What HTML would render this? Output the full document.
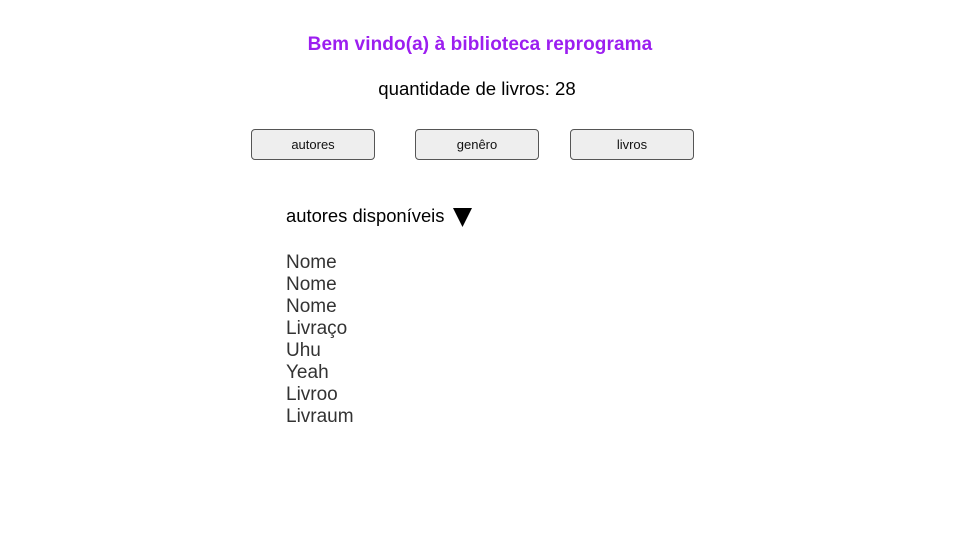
<!DOCTYPE html>
<html><head><meta charset="utf-8"><style>
body{margin:0;width:960px;height:540px;background:#fff;position:relative;font-family:"Liberation Sans",sans-serif;overflow:hidden}
.a{position:absolute;white-space:nowrap}
.t{left:0;width:960px;text-align:center;top:34px;color:#9c1ef0;font-size:19px;font-weight:bold;letter-spacing:0.1px}
.q{left:0;width:954px;text-align:center;top:78px;font-size:18.6px;color:#000}
.b{top:129px;height:29px;width:122px;border:1px solid #555;border-radius:4px;background:#eeeeee;font-size:13px;text-align:center;line-height:29px;color:#111}
.l{left:286px;font-size:19px;color:#333;line-height:22px}
</style></head><body>
<div class="a t">Bem vindo(a) à biblioteca reprograma</div>
<div class="a q">quantidade de livros: 28</div>
<div class="a b" style="left:251px">autores</div>
<div class="a b" style="left:415px">genêro</div>
<div class="a b" style="left:570px">livros</div>
<div class="a" style="left:286px;top:205px;font-size:18.4px">autores disponíveis</div>
<svg class="a" style="left:453px;top:208px" width="19" height="19"><polygon points="0,0 19,0 9.5,19" fill="#000"/></svg>
<div class="a l" style="top:252px">Nome<br>Nome<br>Nome<br>Livraço<br>Uhu<br>Yeah<br>Livroo<br>Livraum</div>
</body></html>
